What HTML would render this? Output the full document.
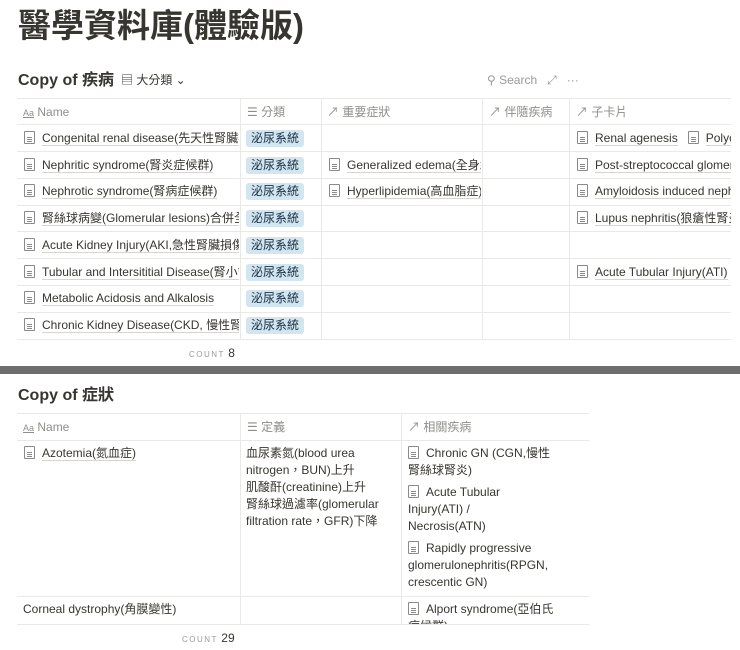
<!DOCTYPE html>
<html><head><meta charset="utf-8"><style>
*{margin:0;padding:0;box-sizing:border-box}
body{width:740px;height:650px;overflow:hidden;background:#fff;font-family:"Liberation Sans","Noto Sans CJK TC",sans-serif;color:#37352f;position:relative}
.a{position:absolute;white-space:nowrap;overflow:hidden;line-height:16px}
.h{position:absolute;height:1px;background:#e9e9e7}
.v{position:absolute;width:1px;background:#e9e9e7}
.hd{font-size:12px;color:#8f8e8a}
.t{font-size:12px;font-weight:normal;color:#37352f}
.u{border-bottom:1px solid #d6d5d2}
.tag{position:absolute;background:#d3e5ef;color:#183347;font-size:12px;padding:0 5px;border-radius:3px;line-height:17px;height:17px}
.ic{display:inline-block;width:11px;height:13px;border:1px solid #8a8a8a;border-radius:1px;vertical-align:-2px;margin-right:7px;position:relative;background:linear-gradient(#8a8a8a,#8a8a8a) 2px 5px/5px 1px no-repeat,linear-gradient(#8a8a8a,#8a8a8a) 2px 7px/5px 1px no-repeat,linear-gradient(#8a8a8a,#8a8a8a) 2px 9px/5px 1px no-repeat}
.w{white-space:normal;line-height:17px}
</style></head><body>
<div class="a" style="left:18px;top:6px;font-size:33px;line-height:40px;font-weight:bold;color:#37352f">醫學資料庫(體驗版)</div>

<div class="a" style="left:18px;top:71px;font-size:16px;line-height:20px;font-weight:bold">Copy of 疾病</div>
<div class="a" style="left:121px;top:72px;font-size:12px;color:#37352f">▤ 大分類 ⌄</div>
<div class="a" style="left:487px;top:72px;font-size:12px;color:#9b9a97">⚲ Search &nbsp; ⤢ &nbsp; ···</div>

<div class="h" style="left:17px;top:98px;width:714px"></div>
<div class="h" style="left:17px;top:124px;width:714px"></div>
<div class="h" style="left:17px;top:151px;width:714px"></div>
<div class="h" style="left:17px;top:178px;width:714px"></div>
<div class="h" style="left:17px;top:205px;width:714px"></div>
<div class="h" style="left:17px;top:231px;width:714px"></div>
<div class="h" style="left:17px;top:258px;width:714px"></div>
<div class="h" style="left:17px;top:285px;width:714px"></div>
<div class="h" style="left:17px;top:312px;width:714px"></div>
<div class="h" style="left:17px;top:339px;width:714px"></div>
<div class="v" style="left:240px;top:98px;height:241px"></div>
<div class="v" style="left:321px;top:98px;height:241px"></div>
<div class="v" style="left:482px;top:98px;height:241px"></div>
<div class="v" style="left:569px;top:98px;height:241px"></div>

<div class="a hd" style="left:23px;top:104px"><span style="font-size:9px;text-decoration:underline">Aa</span> Name</div>
<div class="a hd" style="left:247px;top:104px">☰ 分類</div>
<div class="a hd" style="left:327px;top:104px">↗ 重要症狀</div>
<div class="a hd" style="left:489px;top:104px">↗ 伴隨疾病</div>
<div class="a hd" style="left:576px;top:104px">↗ 子卡片</div>

<div class="a t" style="left:24px;top:130px;width:215px"><span class="ic"></span><span class="u">Congenital renal disease(先天性腎臟疾病)</span></div>
<div class="a t" style="left:24px;top:157px;width:215px"><span class="ic"></span><span class="u">Nephritic syndrome(腎炎症候群)</span></div>
<div class="a t" style="left:24px;top:183px;width:215px"><span class="ic"></span><span class="u">Nephrotic syndrome(腎病症候群)</span></div>
<div class="a t" style="left:24px;top:210px;width:215px"><span class="ic"></span><span class="u">腎絲球病變(Glomerular lesions)合併全身</span></div>
<div class="a t" style="left:24px;top:237px;width:215px"><span class="ic"></span><span class="u">Acute Kidney Injury(AKI,急性腎臟損傷)</span></div>
<div class="a t" style="left:24px;top:264px;width:215px"><span class="ic"></span><span class="u">Tubular and Intersititial Disease(腎小管)</span></div>
<div class="a t" style="left:24px;top:290px;width:215px"><span class="ic"></span><span class="u">Metabolic Acidosis and Alkalosis</span></div>
<div class="a t" style="left:24px;top:317px;width:215px"><span class="ic"></span><span class="u">Chronic Kidney Disease(CKD, 慢性腎臟病)</span></div>

<div class="tag" style="left:246px;top:130px">泌尿系統</div>
<div class="tag" style="left:246px;top:157px">泌尿系統</div>
<div class="tag" style="left:246px;top:183px">泌尿系統</div>
<div class="tag" style="left:246px;top:210px">泌尿系統</div>
<div class="tag" style="left:246px;top:237px">泌尿系統</div>
<div class="tag" style="left:246px;top:264px">泌尿系統</div>
<div class="tag" style="left:246px;top:290px">泌尿系統</div>
<div class="tag" style="left:246px;top:317px">泌尿系統</div>

<div class="a t" style="left:329px;top:157px;width:152px"><span class="ic"></span><span class="u">Generalized edema(全身水腫)</span></div>
<div class="a t" style="left:329px;top:183px;width:152px"><span class="ic"></span><span class="u">Hyperlipidemia(高血脂症)</span></div>

<div class="a t" style="left:577px;top:130px;width:154px"><span class="ic"></span><span class="u">Renal agenesis</span> &nbsp; <span class="ic"></span><span class="u">Polycystic</span></div>
<div class="a t" style="left:577px;top:157px;width:154px"><span class="ic"></span><span class="u">Post-streptococcal glomerulonephritis</span></div>
<div class="a t" style="left:577px;top:183px;width:154px"><span class="ic"></span><span class="u">Amyloidosis induced nephropathy</span></div>
<div class="a t" style="left:577px;top:210px;width:154px"><span class="ic"></span><span class="u">Lupus nephritis(狼瘡性腎炎)</span></div>
<div class="a t" style="left:577px;top:264px;width:154px"><span class="ic"></span><span class="u">Acute Tubular Injury(ATI)</span></div>

<div class="a" style="left:189px;top:345px;font-size:12px;color:#9b9a97"><span style="font-size:8px;letter-spacing:1.5px">COUNT</span> <span style="color:#37352f">8</span></div>

<div class="a" style="left:0;top:366px;width:740px;height:8px;background:#6e6e6e"></div>

<div class="a" style="left:18px;top:386px;font-size:16px;line-height:20px;font-weight:bold">Copy of 症狀</div>

<div class="h" style="left:17px;top:413px;width:572px"></div>
<div class="h" style="left:17px;top:440px;width:572px"></div>
<div class="h" style="left:17px;top:596px;width:572px"></div>
<div class="h" style="left:17px;top:624px;width:572px"></div>
<div class="v" style="left:240px;top:413px;height:211px"></div>
<div class="v" style="left:401px;top:413px;height:211px"></div>

<div class="a hd" style="left:23px;top:419px"><span style="font-size:9px;text-decoration:underline">Aa</span> Name</div>
<div class="a hd" style="left:247px;top:419px">☰ 定義</div>
<div class="a hd" style="left:408px;top:419px">↗ 相關疾病</div>

<div class="a t" style="left:24px;top:445px"><span class="ic"></span><span class="u">Azotemia(氮血症)</span></div>
<div class="a t w" style="left:246px;top:445px;width:150px">血尿素氮(blood urea nitrogen，BUN)上升<br>肌酸酐(creatinine)上升<br>腎絲球過濾率(glomerular filtration rate，GFR)下降</div>
<div class="a t w" style="left:408px;top:445px;width:150px"><span class="ic"></span>Chronic GN (CGN,慢性腎絲球腎炎)</div>
<div class="a t w" style="left:408px;top:484px;width:120px"><span class="ic"></span>Acute Tubular Injury(ATI) / Necrosis(ATN)</div>
<div class="a t w" style="left:408px;top:540px;width:160px"><span class="ic"></span>Rapidly progressive glomerulonephritis(RPGN, crescentic GN)</div>
<div class="a t" style="left:23px;top:601px">Corneal dystrophy(角膜變性)</div>
<div class="a t w" style="left:408px;top:601px;width:150px;height:23px"><span class="ic"></span>Alport syndrome(亞伯氏症候群)</div>

<div class="a" style="left:182px;top:630px;font-size:12px;color:#9b9a97"><span style="font-size:8px;letter-spacing:1.5px">COUNT</span> <span style="color:#37352f">29</span></div>
</body></html>
